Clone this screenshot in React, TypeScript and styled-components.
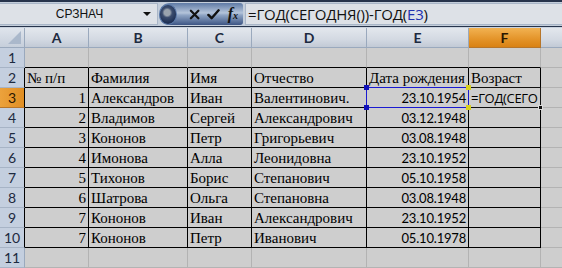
import React from "react";
import styled, { createGlobalStyle } from "styled-components";

const GlobalStyle = createGlobalStyle`
  html, body { margin: 0; padding: 0; background: #c9d2de; }
  * { box-sizing: border-box; }
`;

const Page = styled.div`
  width: 562px;
  height: 268px;
  overflow: hidden;
  display: flex;
  flex-direction: column;
  background: #c9d2de;
`;

const FormulaBar = styled.div`
  height: 27px;
  display: flex;
  align-items: stretch;
  border-top: 2px solid #27344c;
  border-bottom: 1px solid #27344c;
  background: #c4cedb;
  padding: 1px 0;
`;

const NameBox = styled.div`
  width: 158px;
  display: flex;
  align-items: center;
  background: #dde1e7;
  border: 1px solid #a9b6c8;
  border-left: none;
  font-family: "Liberation Sans", Arial, sans-serif;
  font-size: 12px;
  color: #111;
  padding-right: 4px;
`;

const NameText = styled.span`
  flex: 1;
  text-align: center;
  padding-left: 16px;
`;

const DropArrow = styled.span`
  width: 0;
  height: 0;
  border-left: 4px solid transparent;
  border-right: 4px solid transparent;
  border-top: 4px solid #111;
  margin-right: 2px;
`;

const Capsule = styled.div`
  width: 84px;
  display: flex;
  align-items: center;
  gap: 6px;
  background: linear-gradient(#5f7aa5, #b4c4da 45%, #8ea4c4 55%, #3d5584);
  border-radius: 11px 3px 3px 11px;
  padding: 0 5px 0 0;
  margin-left: 1px;
`;

const Ball = styled.div`
  width: 21px;
  height: 21px;
  border-radius: 50%;
  background: radial-gradient(circle at 45% 40%, #9aa3ae 0 3px, #3c4d6e 5px, #1f3156 10px);
  border: 1px solid #5b79a8;
  margin-right: 6px;
`;

const Fx = styled.span`
  font-family: "Liberation Serif", "Times New Roman", serif;
  font-style: italic;
  font-weight: bold;
  font-size: 16px;
  color: #111;
  margin-left: 2px;
  sub {
    font-size: 10px;
    vertical-align: baseline;
  }
`;

const FormulaInput = styled.div`
  flex: 1;
  margin-left: 2px;
  display: flex;
  align-items: center;
  background: #dde1e7;
  border: 1px solid #a9b6c8;
  border-right: none;
  padding-left: 2px;
  font-family: "Open Sans", "Noto Sans", sans-serif;
  font-size: 15px;
  color: #111;
  letter-spacing: -0.2px;
`;

const Ref = styled.span`
  color: #2030b0;
`;

const Spacer = styled.div`
  height: 3px;
  background: #c9d2de;
`;

const Grid = styled.div`
  display: grid;
  grid-template-columns: 25px 64px 99px 64px 115px 102px 72px 80px;
  grid-auto-rows: 20px;
`;

const Corner = styled.div`
  background: linear-gradient(#dfe4ec, #c6cfdb);
  border-right: 1px solid #9aa9bd;
  border-bottom: 1px solid #9aa9bd;
  position: relative;
  &::after {
    content: "";
    position: absolute;
    right: 3px;
    bottom: 3px;
    border-left: 13px solid transparent;
    border-bottom: 13px solid #aab8cb;
  }
`;

const ColHead = styled.div<{ $sel?: boolean }>`
  display: flex;
  align-items: center;
  justify-content: center;
  font-family: Lato, "Open Sans", sans-serif;
  font-weight: bold;
  font-size: 14px;
  color: ${(p) => (p.$sel ? "#2a1600" : "#1d2a40")};
  background: ${(p) =>
    p.$sel
      ? "linear-gradient(#f2b252, #e39328 60%, #d98214)"
      : "linear-gradient(#e3e7ed, #d3d9e2 60%, #c2cad6)"};
  border-right: 1px solid ${(p) => (p.$sel ? "#b7762a" : "#9aa9bd")};
  border-bottom: 1px solid ${(p) => (p.$sel ? "#b7762a" : "#9aa9bd")};
`;

const RowHead = styled.div<{ $sel?: boolean; $edge?: boolean }>`
  display: flex;
  align-items: center;
  justify-content: center;
  font-family: Lato, "Open Sans", sans-serif;
  font-size: 14px;
  color: ${(p) => (p.$sel ? "#2a1600" : "#1d2a40")};
  background: ${(p) => (p.$sel ? "linear-gradient(90deg, #eca23c, #e08e22)" : "#c4cfdf")};
  border-right: 1px solid ${(p) => (p.$edge ? "#000" : "#9aa9bd")};
  border-bottom: 1px solid ${(p) => (p.$sel ? "#b7762a" : "#a7b4c6")};
`;

const Cell = styled.div<{
  $tb?: boolean;
  $tbBottom?: boolean;
  $align?: "left" | "right";
  $sans?: boolean;
}>`
  position: relative;
  display: flex;
  align-items: center;
  justify-content: ${(p) => (p.$align === "right" ? "flex-end" : "flex-start")};
  padding: 1px 2px 0 2px;
  white-space: nowrap;
  overflow: visible;
  background: #cecece;
  border-right: 1px solid ${(p) => (p.$tb ? "#000" : "#b3b3b3")};
  border-bottom: 1px solid ${(p) => (p.$tb || p.$tbBottom ? "#000" : "#b3b3b3")};
  font-family: ${(p) =>
    p.$sans ? 'Lato, "Open Sans", sans-serif' : '"Liberation Serif", "Times New Roman", serif'};
  font-size: ${(p) => (p.$sans ? "13px" : "15px")};
  letter-spacing: ${(p) => (p.$sans ? "-0.2px" : "0")};
  color: #000;
`;

const EditText = styled.span`
  font-family: "Open Sans", "Noto Sans", sans-serif;
  font-size: 13px;
  letter-spacing: -0.3px;
`;

const RefBox = styled.div`
  position: absolute;
  z-index: 2;
  left: -1px;
  top: -1px;
  right: -1px;
  bottom: -1px;
  border: 1px solid #1a1ad0;
  pointer-events: none;
`;

const Handle = styled.span<{ $pos: "tl" | "tr" | "bl" | "br"; $color: string }>`
  position: absolute;
  width: 5px;
  height: 5px;
  background: ${(p) => p.$color};
  ${(p) => (p.$pos[0] === "t" ? "top: -3px;" : "bottom: -3px;")}
  ${(p) => (p.$pos[1] === "l" ? "left: -3px;" : "right: -3px;")}
`;

const ActiveBox = styled.div`
  position: absolute;
  z-index: 1;
  left: -1px;
  top: -1px;
  right: -1px;
  bottom: -1px;
  border: 1px solid #111;
  pointer-events: none;
`;

const FillHandle = styled.span`
  position: absolute;
  right: -3px;
  bottom: -3px;
  width: 5px;
  height: 5px;
  background: #111;
  border: 1px solid #ddd;
`;

type Row = [string, string, string, string, string];

const data: Row[] = [
  ["1", "Александров", "Иван", "Валентинович.", "23.10.1954"],
  ["2", "Владимов", "Сергей", "Александрович", "03.12.1948"],
  ["3", "Кононов", "Петр", "Григорьевич", "03.08.1948"],
  ["4", "Имонова", "Алла", "Леонидовна", "23.10.1952"],
  ["5", "Тихонов", "Борис", "Степанович", "05.10.1958"],
  ["6", "Шатрова", "Ольга", "Степановна", "03.08.1948"],
  ["7", "Кононов", "Иван", "Александрович", "23.10.1952"],
  ["7", "Кононов", "Петр", "Иванович", "05.10.1978"],
];

const headers = ["№ п/п", "Фамилия", "Имя", "Отчество", "Дата рождения", "Возраст"];
const cols = ["A", "B", "C", "D", "E", "F", ""];

const XIcon = () => (
  <svg width="13" height="13" viewBox="0 0 12 12">
    <path d="M2 2 L10 10 M10 2 L2 10" stroke="#111" strokeWidth="2.4" strokeLinecap="round" />
  </svg>
);

const CheckIcon = () => (
  <svg width="15" height="13" viewBox="0 0 14 12">
    <path d="M1.5 6.5 L5 10 L12.5 1.5" stroke="#111" strokeWidth="2.6" fill="none" strokeLinecap="round" strokeLinejoin="round" />
  </svg>
);

export default function App() {
  return (
    <>
      <GlobalStyle />
      <Page>
        <FormulaBar>
          <NameBox>
            <NameText>СРЗНАЧ</NameText>
            <DropArrow />
          </NameBox>
          <Capsule>
            <Ball />
            <XIcon />
            <CheckIcon />
            <Fx>
              f<sub>x</sub>
            </Fx>
          </Capsule>
          <FormulaInput>
            =ГОД(СЕГОДНЯ())-ГОД(<Ref>E3</Ref>)
          </FormulaInput>
        </FormulaBar>
        <Spacer />
        <Grid>
          <Corner />
          {cols.map((c, i) => (
            <ColHead key={i} $sel={c === "F"}>
              {c}
            </ColHead>
          ))}

          <RowHead>1</RowHead>
          {cols.map((c, i) => (
            <Cell key={i} $tbBottom={i < 6} />
          ))}

          <RowHead $edge>2</RowHead>
          {headers.map((h) => (
            <Cell key={h} $tb>
              {h}
            </Cell>
          ))}
          <Cell />

          {data.map((r, ri) => {
            const rowNum = ri + 3;
            return (
              <React.Fragment key={rowNum}>
                <RowHead $sel={rowNum === 3} $edge>
                  {rowNum}
                </RowHead>
                <Cell $tb $align="right">
                  {r[0]}
                </Cell>
                <Cell $tb>{r[1]}</Cell>
                <Cell $tb>{r[2]}</Cell>
                <Cell $tb>{r[3]}</Cell>
                <Cell $tb $sans $align="right">
                  {r[4]}
                  {rowNum === 3 && (
                    <RefBox>
                      <Handle $pos="tl" $color="#1010b8" />
                      <Handle $pos="bl" $color="#1010b8" />
                      <Handle $pos="tr" $color="#d8d020" />
                      <Handle $pos="br" $color="#d8d020" />
                    </RefBox>
                  )}
                </Cell>
                <Cell $tb>
                  {rowNum === 3 && (
                    <>
                      <EditText>=ГОД(СЕГО</EditText>
                      <ActiveBox>
                        <FillHandle />
                      </ActiveBox>
                    </>
                  )}
                </Cell>
                <Cell />
              </React.Fragment>
            );
          })}

          <RowHead>11</RowHead>
          {cols.map((c, i) => (
            <Cell key={i} />
          ))}
        </Grid>
      </Page>
    </>
  );
}
